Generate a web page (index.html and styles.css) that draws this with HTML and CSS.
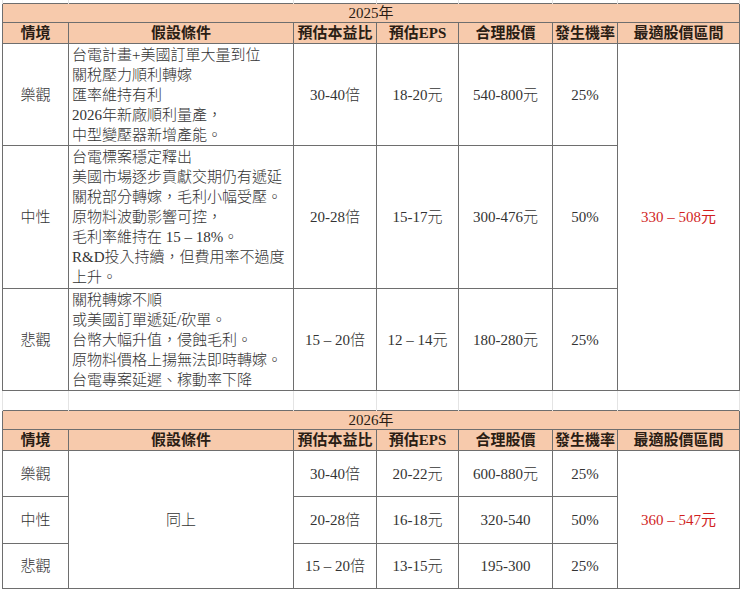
FILE: index.html
```html
<!DOCTYPE html>
<html lang="zh-Hant">
<head>
<meta charset="utf-8">
<title>股價情境分析</title>
<link rel="stylesheet" href="styles.css">
</head>
<body>
<table class="sheet">
  <colgroup>
    <col class="c-scene"><col class="c-cond"><col class="c-pe"><col class="c-eps"><col class="c-price"><col class="c-prob"><col class="c-best">
  </colgroup>
  <tr class="gap gap-top"><td></td><td></td><td></td><td></td><td></td><td></td><td></td></tr>
  <tr class="title"><td colspan="7">2025年</td></tr>
  <tr class="head">
    <td>情境</td><td>假設條件</td><td>預估本益比</td><td>預估EPS</td><td>合理股價</td><td>發生機率</td><td>最適股價區間</td>
  </tr>
  <tr class="r5">
    <td>樂觀</td>
    <td class="cond">台電計畫+美國訂單大量到位<br>關稅壓力順利轉嫁<br>匯率維持有利<br>2026年新廠順利量產，<br>中型變壓器新增產能。</td>
    <td>30-40倍</td><td>18-20元</td><td>540-800元</td><td>25%</td>
    <td rowspan="3" class="best">330 – 508元</td>
  </tr>
  <tr class="r7">
    <td>中性</td>
    <td class="cond">台電標案穩定釋出<br>美國市場逐步貢獻交期仍有遞延<br>關稅部分轉嫁，毛利小幅受壓。<br>原物料波動影響可控，<br>毛利率維持在 15 – 18%。<br>R&amp;D投入持續，但費用率不過度<br>上升。</td>
    <td>20-28倍</td><td>15-17元</td><td>300-476元</td><td>50%</td>
  </tr>
  <tr class="r5">
    <td>悲觀</td>
    <td class="cond">關稅轉嫁不順<br>或美國訂單遞延/砍單。<br>台幣大幅升值，侵蝕毛利。<br>原物料價格上揚無法即時轉嫁。<br>台電專案延遲、稼動率下降</td>
    <td>15 – 20倍</td><td>12 – 14元</td><td>180-280元</td><td>25%</td>
  </tr>
  <tr class="gap gap-mid"><td></td><td></td><td></td><td></td><td></td><td></td><td></td></tr>
  <tr class="title"><td colspan="7">2026年</td></tr>
  <tr class="head">
    <td>情境</td><td>假設條件</td><td>預估本益比</td><td>預估EPS</td><td>合理股價</td><td>發生機率</td><td>最適股價區間</td>
  </tr>
  <tr class="r1">
    <td>樂觀</td>
    <td rowspan="3">同上</td>
    <td>30-40倍</td><td>20-22元</td><td>600-880元</td><td>25%</td>
    <td rowspan="3" class="best">360 – 547元</td>
  </tr>
  <tr class="r1b">
    <td>中性</td>
    <td>20-28倍</td><td>16-18元</td><td>320-540</td><td>50%</td>
  </tr>
  <tr class="r1c">
    <td>悲觀</td>
    <td>15 – 20倍</td><td>13-15元</td><td>195-300</td><td>25%</td>
  </tr>
</table>
</body>
</html>
```

FILE: styles.css
```css
html, body {
  margin: 0;
  padding: 0;
  background: #ffffff;
}

body {
  padding-left: 2px;
  font-family: "Liberation Serif", "Noto Sans CJK TC", serif;
  font-size: 15px;
  color: #333333;
}

.sheet {
  border-collapse: collapse;
  table-layout: fixed;
  width: 737px;
}

.c-scene { width: 66px; }
.c-cond { width: 225px; }
.c-pe { width: 83px; }
.c-eps { width: 82px; }
.c-price { width: 94px; }
.c-prob { width: 65px; }
.c-best { width: 122px; }

.sheet td {
  border: 1px solid #6e6e6e;
  padding: 0 3px;
  text-align: center;
  vertical-align: middle;
  line-height: 20px;
  white-space: nowrap;
  overflow: hidden;
  font-weight: 300;
}

.sheet td.cond {
  text-align: left;
  padding: 0 0 0 3px;
}

.sheet td.best {
  color: #d11f1f;
  font-weight: 400;
}

.gap td {
  border-top: none;
  border-bottom: none;
  border-left: 1px solid #e4e4e4;
  border-right: 1px solid #e4e4e4;
  padding: 0;
  line-height: 0;
}

.gap-top td { height: 3px; }
.gap-mid td { height: 19px; }

.title td {
  background: #f7caac;
  color: #2a1d14;
  height: 18px;
  line-height: 18px;
  font-weight: 400;
}

.head td {
  background: #f7caac;
  color: #2a1d14;
  height: 20px;
  line-height: 20px;
  font-weight: 700;
  padding: 0;
}

.r5 td { height: 101px; }
.r7 td { height: 142px; }
.r1 td { height: 45px; }
.r1b td { height: 46px; }
.r1c td { height: 44px; }
```
